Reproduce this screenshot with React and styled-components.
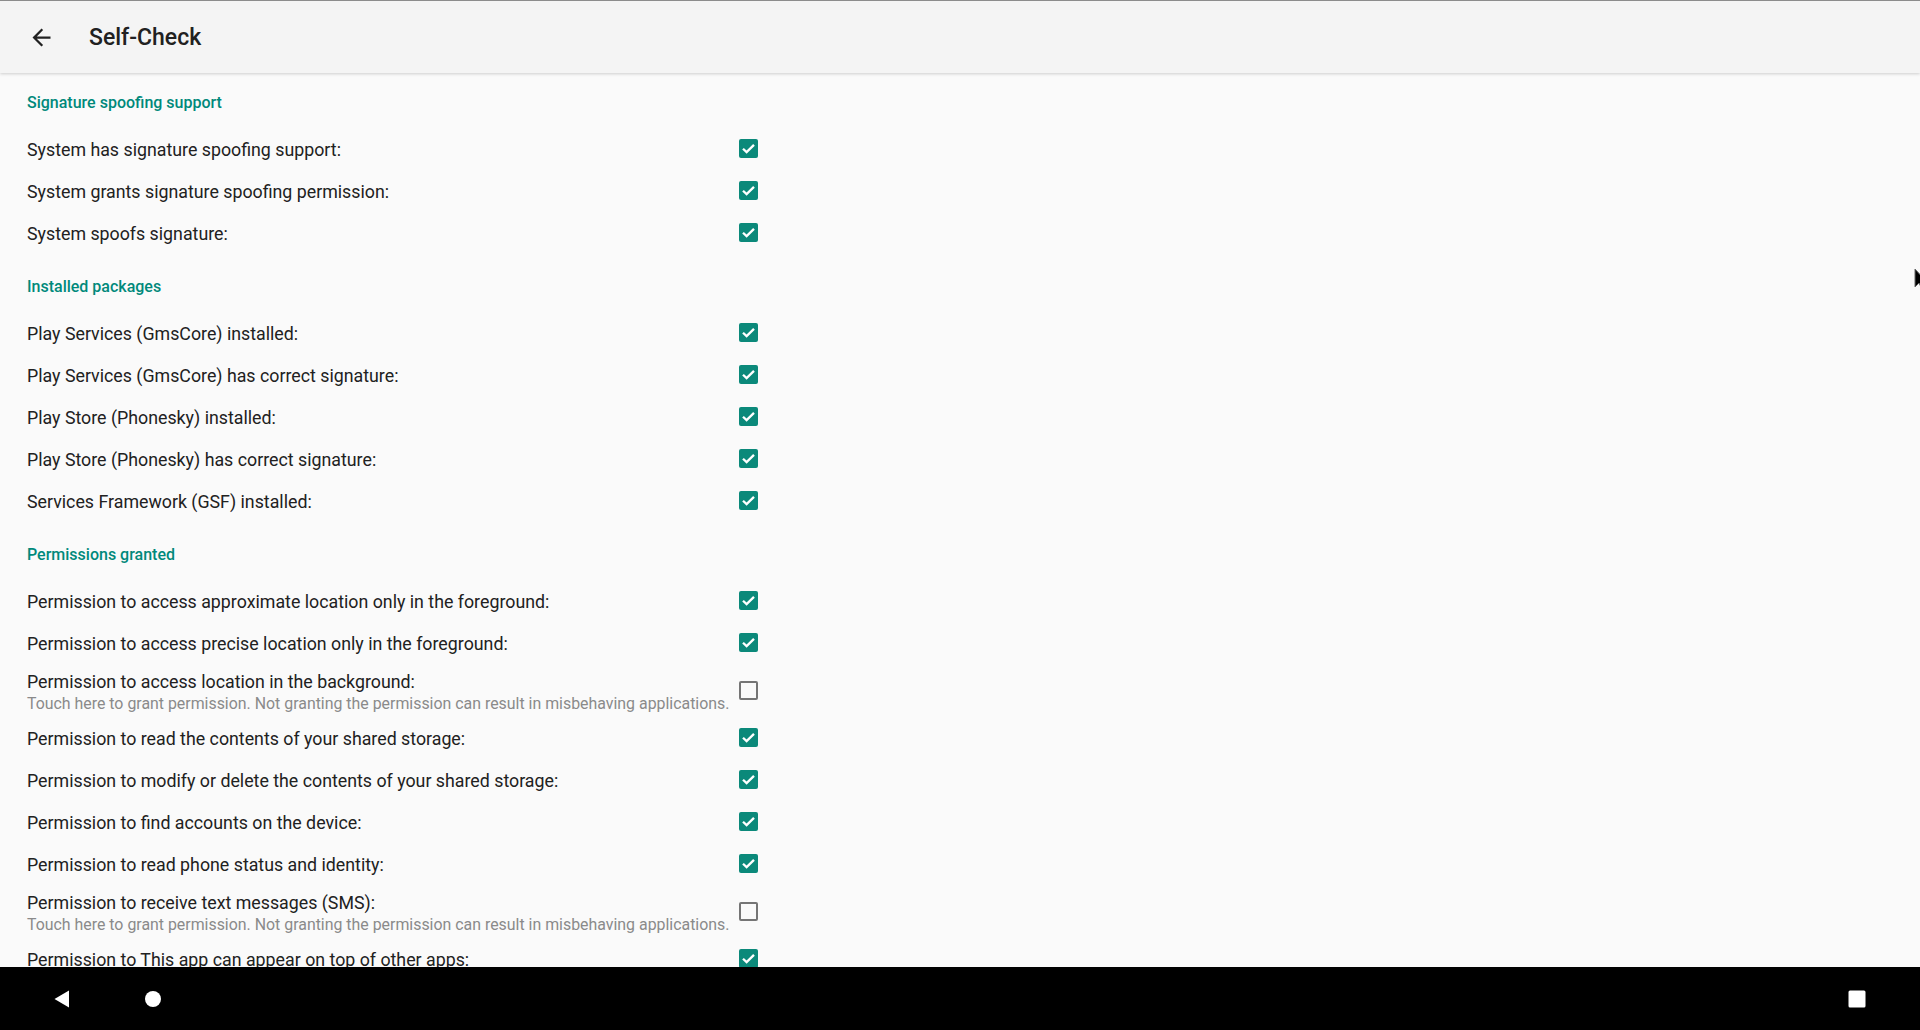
import React from 'react';
import styled, { createGlobalStyle } from 'styled-components';

const GlobalStyle = createGlobalStyle`
  html, body {
    margin: 0;
    padding: 0;
    background: #fafafa;
    overflow: hidden;
  }
  body {
    font-family: Roboto, "Liberation Sans", sans-serif;
    color: #212121;
  }
`

const sections = [
  {
    title: 'Signature spoofing support',
    items: [
      { label: 'System has signature spoofing support:', ok: true },
      { label: 'System grants signature spoofing permission:', ok: true },
      { label: 'System spoofs signature:', ok: true },
    ],
  },
  {
    title: 'Installed packages',
    items: [
      { label: 'Play Services (GmsCore) installed:', ok: true },
      { label: 'Play Services (GmsCore) has correct signature:', ok: true },
      { label: 'Play Store (Phonesky) installed:', ok: true },
      { label: 'Play Store (Phonesky) has correct signature:', ok: true },
      { label: 'Services Framework (GSF) installed:', ok: true },
    ],
  },
  {
    title: 'Permissions granted',
    items: [
      { label: 'Permission to access approximate location only in the foreground:', ok: true },
      { label: 'Permission to access precise location only in the foreground:', ok: true },
      { label: 'Permission to access location in the background:', ok: false },
      { label: 'Permission to read the contents of your shared storage:', ok: true },
      { label: 'Permission to modify or delete the contents of your shared storage:', ok: true },
      { label: 'Permission to find accounts on the device:', ok: true },
      { label: 'Permission to read phone status and identity:', ok: true },
      { label: 'Permission to receive text messages (SMS):', ok: false },
      { label: 'Permission to This app can appear on top of other apps:', ok: true },
    ],
  },
]

const HINT = 'Touch here to grant permission. Not granting the permission can result in misbehaving applications.'

const Screen = styled.div`
  position: relative;
  width: 1920px;
  height: 1030px;
  display: flex;
  flex-direction: column;
  overflow: hidden;
`

const AppBar = styled.header`
  position: relative;
  z-index: 1;
  flex: 0 0 72px;
  display: flex;
  align-items: center;
  background: #f4f4f4;
  border-top: 1px solid #8c8c8c;
  box-shadow: 0 1px 3px rgba(0, 0, 0, 0.18);
`

const BackButton = styled.div`
  display: flex;
  align-items: center;
  justify-content: center;
  width: 27px;
  height: 27px;
  margin-left: 28px;
  margin-top: 1px;
`

const Title = styled.h1`
  margin: 0 0 0 34px;
  font-size: 23px;
  font-weight: 500;
  color: #212121;
  letter-spacing: 0;
`

const Content = styled.main`
  flex: 1;
  overflow: hidden;
  padding-left: 27px;
`

const SectionTitle = styled.div`
  padding: ${props => (props.first ? '21px 0 17px' : '23px 0 17px')};
  line-height: 18px;
  font-size: 16px;
  font-weight: 500;
  color: #00897b;
`

const Row = styled.div`
  width: 731px;
  display: flex;
  align-items: center;
  justify-content: space-between;
  box-sizing: border-box;
  height: ${props => (props.twoLine ? '53px' : '42px')};
  padding: ${props => (props.twoLine ? '6px 0 4px' : '0')};
`

const Texts = styled.div`
  display: flex;
  flex-direction: column;
`

const Label = styled.div`
  font-size: 17.8px;
  line-height: 22px;
  color: #212121;
  white-space: nowrap;
`

const Hint = styled.div`
  margin-top: 1px;
  font-size: 15.9px;
  line-height: 20px;
  color: #8a8a8a;
  white-space: nowrap;
`

const Box = styled.div`
  flex: 0 0 auto;
  width: 19px;
  height: 19px;
  margin-bottom: 4px;
  box-sizing: border-box;
  border-radius: 2px;
  display: flex;
  align-items: center;
  justify-content: center;
  background: ${props => (props.checked ? '#0b897a' : 'transparent')};
  border: ${props => (props.checked ? 'none' : '2px solid #757575')};
`

const NavBar = styled.nav`
  flex: 0 0 63px;
  display: flex;
  align-items: center;
  background: #000;
  padding: 0 43px 0 42px;
`

const NavButton = styled.div`
  width: 40px;
  height: 40px;
  display: flex;
  align-items: center;
  justify-content: center;
  margin-right: ${props => (props.gap ? `${props.gap}px` : '0')};
  margin-left: ${props => (props.pushRight ? 'auto' : '0')};
`

const Cursor = styled.svg`
  position: absolute;
  left: 1914px;
  top: 268px;
`

const Check = ({ checked }) => (
  <Box checked={checked}>
    {checked && (
      <svg width="19" height="19" viewBox="0 0 18 18">
        <polyline points="3.8,9.2 7.2,12.5 14.2,5.6" fill="none" stroke="#fff" strokeWidth="2.2" />
      </svg>
    )}
  </Box>
)

const App = () => (
  <Screen>
    <GlobalStyle />
    <AppBar>
      <BackButton>
        <svg width="27" height="27" viewBox="0 0 24 24">
          <path d="M20 11H7.83l5.59-5.59L12 4l-8 8 8 8 1.41-1.41L7.83 13H20v-2z" fill="#212121" />
        </svg>
      </BackButton>
      <Title>Self-Check</Title>
    </AppBar>
    <Content>
      {sections.map((section, i) => (
        <section key={section.title}>
          <SectionTitle first={i === 0}>{section.title}</SectionTitle>
          {section.items.map(item => (
            <Row key={item.label} twoLine={!item.ok}>
              <Texts>
                <Label>{item.label}</Label>
                {!item.ok && <Hint>{HINT}</Hint>}
              </Texts>
              <Check checked={item.ok} />
            </Row>
          ))}
        </section>
      ))}
    </Content>
    <NavBar>
      <NavButton gap={51}>
        <svg width="18" height="18" viewBox="0 0 18 18">
          <polygon points="16,0.5 16,17.5 1.5,9" fill="#fff" />
        </svg>
      </NavButton>
      <NavButton>
        <svg width="18" height="18" viewBox="0 0 18 18">
          <circle cx="9" cy="9" r="8" fill="#fff" />
        </svg>
      </NavButton>
      <NavButton pushRight>
        <svg width="18" height="18" viewBox="0 0 18 18">
          <rect x="0.5" y="0.5" width="17" height="17" rx="1.5" fill="#fff" />
        </svg>
      </NavButton>
    </NavBar>
    <Cursor width="10" height="22" viewBox="0 0 10 22">
      <path d="M1 1 L1 19 L5 15 L8 21 L10 20 L10 11 Z" fill="#000" stroke="#666" strokeWidth="1" />
    </Cursor>
  </Screen>
)

export default App;
